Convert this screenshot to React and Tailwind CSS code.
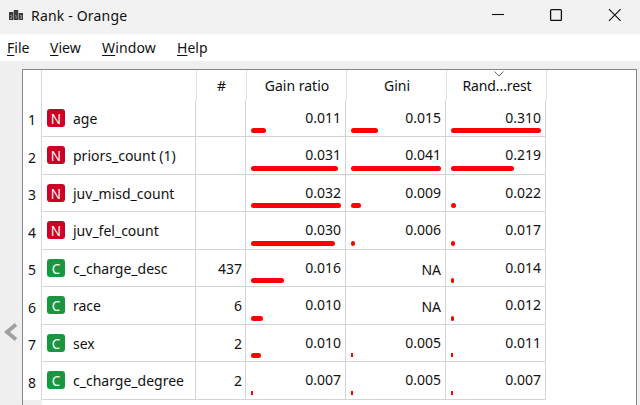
const rows = [
  { n: 1, kind: "N", name: "age", count: "", vals: [["0.011", 15], ["0.015", 26.5], ["0.310", 90]] },
  { n: 2, kind: "N", name: "priors_count (1)", count: "", vals: [["0.031", 86.5], ["0.041", 90], ["0.219", 62.5]] },
  { n: 3, kind: "N", name: "juv_misd_count", count: "", vals: [["0.032", 90], ["0.009", 10], ["0.022", 5]] },
  { n: 4, kind: "N", name: "juv_fel_count", count: "", vals: [["0.030", 84], ["0.006", 4], ["0.017", 4]] },
  { n: 5, kind: "C", name: "c_charge_desc", count: "437", vals: [["0.016", 32.5], ["NA", 0], ["0.014", 3]] },
  { n: 6, kind: "C", name: "race", count: "6", vals: [["0.010", 11.5], ["NA", 0], ["0.012", 3]] },
  { n: 7, kind: "C", name: "sex", count: "2", vals: [["0.010", 10], ["0.005", 2], ["0.011", 2]] },
  { n: 8, kind: "C", name: "c_charge_degree", count: "2", vals: [["0.007", 2], ["0.005", 2], ["0.007", 2]] },
];

function RankIcon() {
  return (
    <svg width="15" height="12" viewBox="0 0 15 12" className="shrink-0">
      <path d="M0 3h4.300v8H0zM4.800 1h4.400v10H4.800zM9.700 4H14v7H9.700z" fill="#3a3a3a" />
      <path d="M1.200 6.500h1.600v1.500L1.300 9.500h1.700M6.300 6.500h.9v3M10.800 6.500h1.700v3h-1.700M11.300 8h1.200" fill="none" stroke="#b5b5b5" strokeWidth=".7" />
    </svg>
  );
}

function TitleBar() {
  return (
    <div className="flex h-[34px] items-start bg-[#f2f2f2] pl-[9px]">
      <div className="pt-[9px]"><RankIcon /></div>
      <span className="ml-[7px] mt-[6px] flex-1 text-[14px] leading-5 tracking-[0.18px]">Rank - Orange</span>
      <svg width="130" height="14" viewBox="0 0 130 14" className="mr-[18px] mt-[8px]" fill="none" stroke="#111">
        <path d="M0 6.5h12" strokeWidth="1.1" />
        <rect x="58.6" y="1.6" width="10.8" height="10.8" rx="1" strokeWidth="1.3" />
        <path d="M117 1.2l11.6 11.6M128.6 1.2L117 12.8" strokeWidth="1.2" />
      </svg>
    </div>
  );
}

function MenuItem({ label, className }) {
  return (
    <span className={className}>
      <span className="underline decoration-1 underline-offset-2">{label[0]}</span>
      {label.slice(1)}
    </span>
  );
}

function MenuBar() {
  return (
    <div className="flex h-[27px] bg-white pl-[7px] pt-[4px] text-[14px] leading-5">
      <MenuItem label="File" className="w-[43px]" />
      <MenuItem label="View" className="w-[52px]" />
      <MenuItem label="Window" className="w-[75px] tracking-[0.15px]" />
      <MenuItem label="Help" />
    </div>
  );
}

function Header() {
  const cell = "border-r border-[#e2e2e2] pt-[6px] text-center leading-5";
  return (
    <div className="flex h-[30px]">
      <div className="w-[19px] border-r border-[#d8d8d8]" />
      <div className={`${cell} w-[155px]`} />
      <div className={`${cell} w-[50px]`}>#</div>
      <div className={`${cell} w-[100px] pl-px`}>Gain ratio</div>
      <div className={`${cell} w-[100px] pl-px`}>Gini</div>
      <div className={`${cell} relative w-[100px] pl-px tracking-[-0.1px]`}>
        Rand...rest
        <svg width="10" height="6" viewBox="0 0 10 6" className="absolute left-[47px] top-[1px]" fill="none" stroke="#666">
          <path d="M.5.5L5 5 9.500.5" />
        </svg>
      </div>
    </div>
  );
}

function KindBadge({ kind }) {
  return (
    <span
      className={`ml-[5px] mt-[9px] h-[18px] w-[18px] rounded-[3px] text-center text-[13.5px] leading-5 text-white ${
        kind === "N" ? "bg-[#cb0024]" : "bg-[#1a9641]"
      }`}
    >
      {kind}
    </span>
  );
}

function ScoreCell({ value, width }) {
  return (
    <div className="flex w-[100px] flex-col border-b border-r border-[#d4d4d4] pl-[5px]">
      <span className={`${value === "NA" ? "pt-[10px]" : "pt-[8px]"} flex-1 pr-[4px] text-right leading-5`}>{value}</span>
      {width > 0 && (
        <span
          className={`bg-[#ff0000] ${width < 3 ? "mb-[4px] h-[4px]" : "mb-[3px] h-[5px] rounded-full"}`}
          style={{ width }}
        />
      )}
    </div>
  );
}

function Row({ row }) {
  const odd = row.n % 2 === 1;
  return (
    <div className={`flex ${odd ? "h-[37px]" : "h-[38px]"}`}>
      <div className={`w-[19px] border-r border-[#d8d8d8] pr-[5px] text-right leading-5 ${odd ? "pt-[10px]" : "pt-[11px]"}`}>
        {row.n}
      </div>
      <div className="flex w-[154px] border-b border-r border-[#d4d4d4]">
        <KindBadge kind={row.kind} />
        <span className="ml-[8px] pt-[9px] leading-5">{row.name}</span>
      </div>
      <div className="w-[50px] border-b border-r border-[#d4d4d4] pr-[3px] pt-[9px] text-right leading-5">{row.count}</div>
      {row.vals.map(([value, width], i) => (
        <ScoreCell key={i} value={value} width={width} />
      ))}
    </div>
  );
}

export default function App() {
  return (
    <div className="flex h-[405px] w-[640px] flex-col overflow-hidden bg-[#efefef] font-['Noto_Sans',sans-serif] text-[14px] text-[#111]">
      <TitleBar />
      <MenuBar />
      <div className="flex flex-1 pt-[8px]">
        <div className="flex w-[22px] items-end pb-[64px] pl-[4px]">
          <svg width="13" height="18" viewBox="0 0 13 18" fill="none" stroke="#a0a0a0" strokeWidth="3.8">
            <path d="M12 1.500L3 9l9 7.500" />
          </svg>
        </div>
        <div className="flex w-[615px] flex-col border-x border-t border-[#828790] bg-white">
          <Header />
          {rows.map((row) => (
            <Row key={row.n} row={row} />
          ))}
          <div className="w-[19px] flex-1 bg-[#efefef]" />
        </div>
      </div>
    </div>
  );
}
